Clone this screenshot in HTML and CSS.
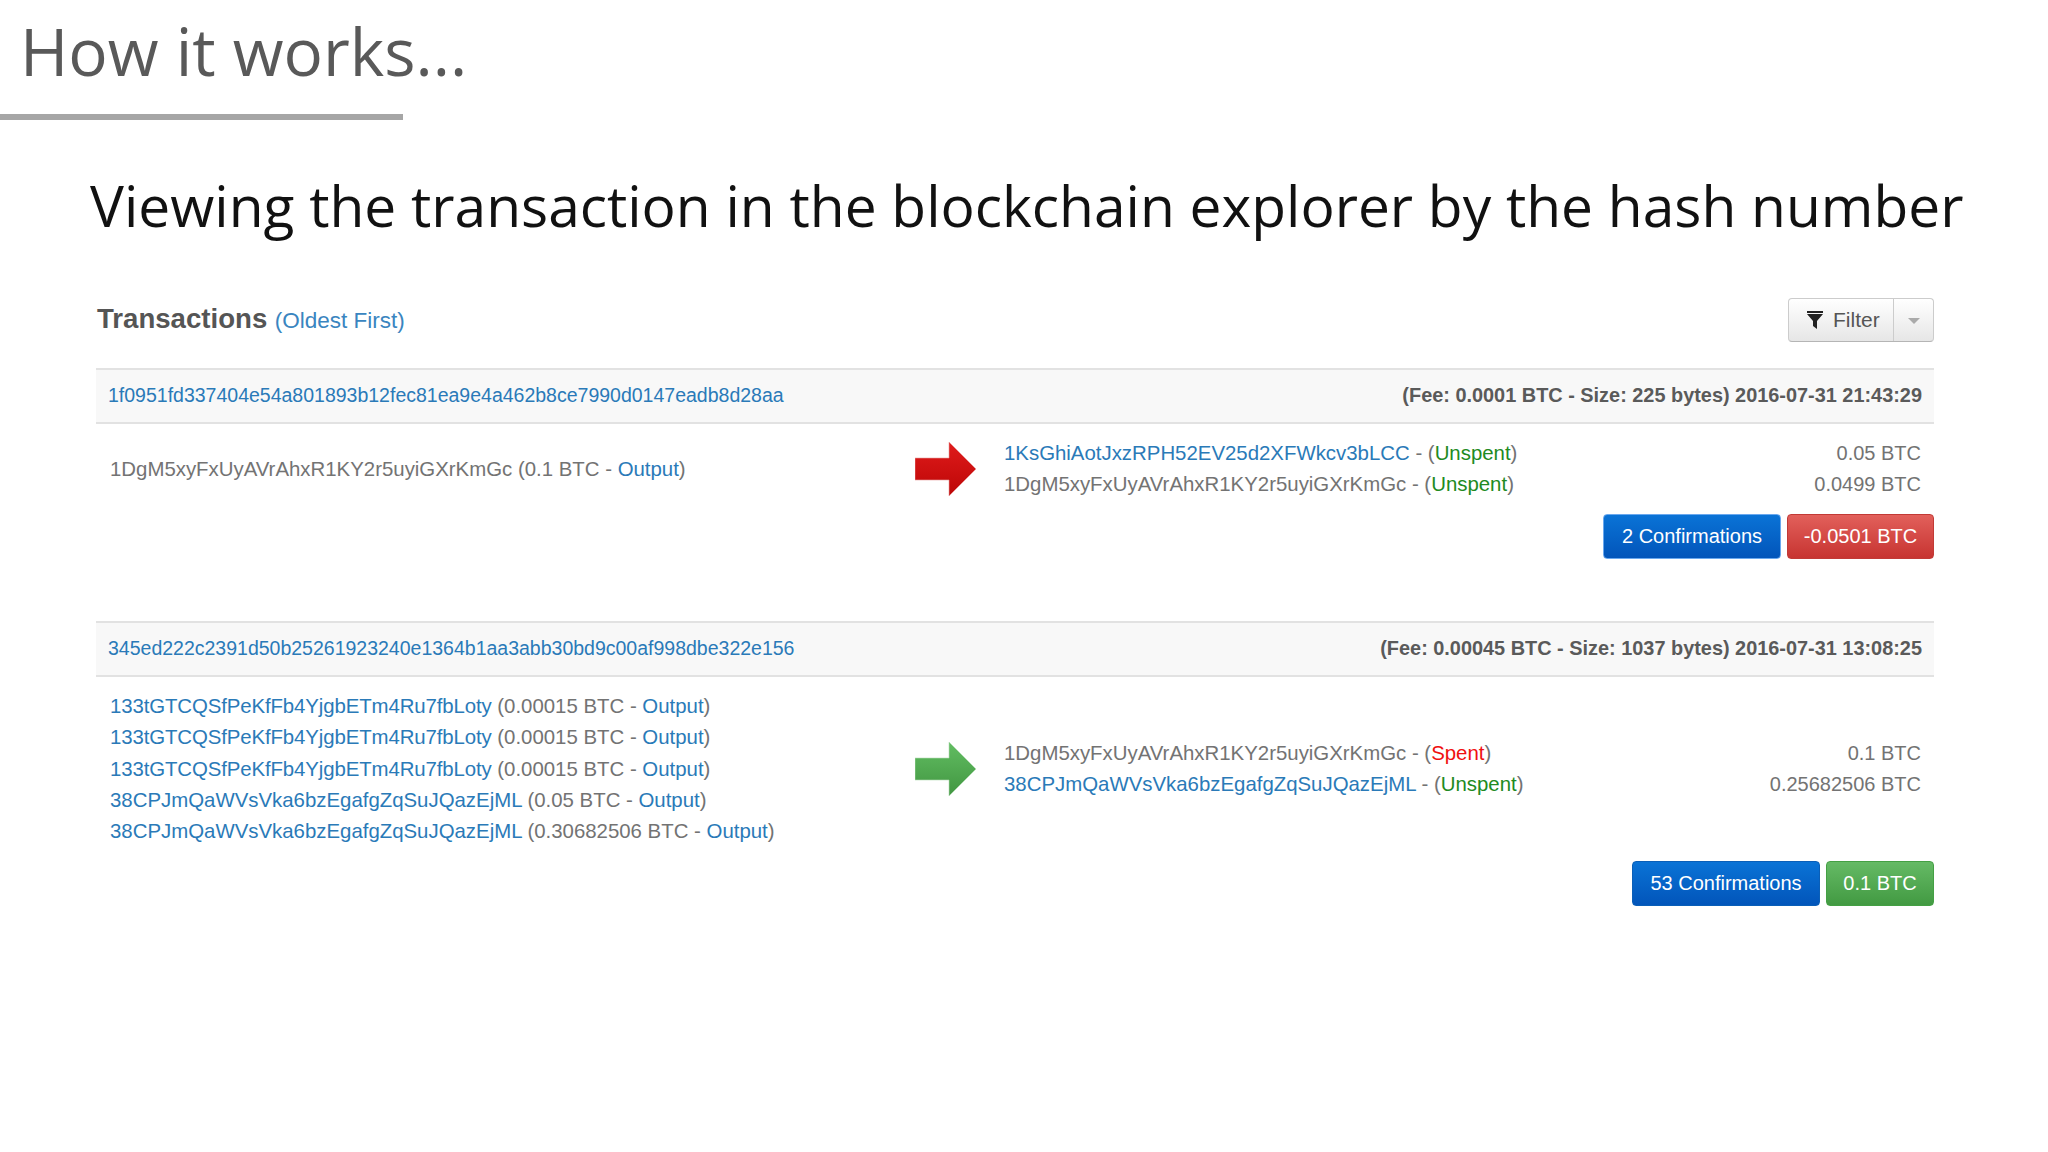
FILE: index.html
```html
<!DOCTYPE html>
<html lang="en">
<head>
    <meta charset="UTF-8">
    <title>How it works</title>
    <link rel="stylesheet" href="styles.css">
</head>
<body>
<div class="head">
    <h1>How it works...</h1>
    <div class="rule"></div>
</div>
<h2>Viewing the transaction in the blockchain explorer by the hash number</h2>
<div class="explorer">
    <div class="top">
        <div class="top-title"><b>Transactions</b> <a href="#">(Oldest First)</a></div>
        <div class="filter">
            <span class="filter-main">
                <svg class="funnel" width="16" height="18" viewBox="0 0 16 18"><path d="M0 0h16v2H0zM0 3h16l-6 7v8l-4-3v-5z"/></svg>
                Filter
            </span>
            <span class="filter-caret"></span>
        </div>
    </div>

    <div class="tx">
        <div class="band">
            <a href="#">1f0951fd337404e54a801893b12fec81ea9e4a462b8ce7990d0147eadb8d28aa</a>
            <b>(Fee: 0.0001 BTC - Size: 225 bytes) 2016-07-31 21:43:29</b>
        </div>
        <div class="flow">
            <div class="inputs">
                <div>1DgM5xyFxUyAVrAhxR1KY2r5uyiGXrKmGc (0.1 BTC - <a href="#">Output</a>)</div>
            </div>
            <svg class="arrow" width="61" height="54" viewBox="0 0 61 54">
                <defs>
                    <linearGradient id="red" x1="0" y1="0" x2="0" y2="1">
                        <stop offset="0" stop-color="#e01c1c"/>
                        <stop offset="1" stop-color="#bc0606"/>
                    </linearGradient>
                </defs>
                <path d="M0 16H34V0L61 27 34 54V38H0z" fill="url(#red)" stroke="#e8a0a0" stroke-width=".6"/>
            </svg>
            <div class="outputs">
                <div class="out"><span class="addr"><a href="#">1KsGhiAotJxzRPH52EV25d2XFWkcv3bLCC</a> - (<i class="unspent">Unspent</i>)</span><span>0.05 BTC</span></div>
                <div class="out"><span class="addr">1DgM5xyFxUyAVrAhxR1KY2r5uyiGXrKmGc - (<i class="unspent">Unspent</i>)</span><span>0.0499 BTC</span></div>
            </div>
        </div>
        <div class="totals">
            <span class="btn btn-blue btn-glow btn-w1">2 Confirmations</span>
            <span class="btn btn-red btn-w2">-0.0501 BTC</span>
        </div>
    </div>

    <div class="tx">
        <div class="band">
            <a href="#">345ed222c2391d50b25261923240e1364b1aa3abb30bd9c00af998dbe322e156</a>
            <b>(Fee: 0.00045 BTC - Size: 1037 bytes) 2016-07-31 13:08:25</b>
        </div>
        <div class="flow">
            <div class="inputs">
                <div><a class="tight" href="#">133tGTCQSfPeKfFb4YjgbETm4Ru7fbLoty</a> (0.00015 BTC - <a href="#">Output</a>)</div>
                <div><a class="tight" href="#">133tGTCQSfPeKfFb4YjgbETm4Ru7fbLoty</a> (0.00015 BTC - <a href="#">Output</a>)</div>
                <div><a class="tight" href="#">133tGTCQSfPeKfFb4YjgbETm4Ru7fbLoty</a> (0.00015 BTC - <a href="#">Output</a>)</div>
                <div><a href="#">38CPJmQaWVsVka6bzEgafgZqSuJQazEjML</a> (0.05 BTC - <a href="#">Output</a>)</div>
                <div><a href="#">38CPJmQaWVsVka6bzEgafgZqSuJQazEjML</a> (0.30682506 BTC - <a href="#">Output</a>)</div>
            </div>
            <svg class="arrow" width="61" height="54" viewBox="0 0 61 54">
                <defs>
                    <linearGradient id="green" x1="0" y1="0" x2="0" y2="1">
                        <stop offset="0" stop-color="#62bd62"/>
                        <stop offset="1" stop-color="#419641"/>
                    </linearGradient>
                </defs>
                <path d="M0 16H34V0L61 27 34 54V38H0z" fill="url(#green)" stroke="#b5dcb5" stroke-width=".6"/>
            </svg>
            <div class="outputs">
                <div class="out"><span class="addr">1DgM5xyFxUyAVrAhxR1KY2r5uyiGXrKmGc - (<i class="spent">Spent</i>)</span><span>0.1 BTC</span></div>
                <div class="out"><span class="addr"><a href="#">38CPJmQaWVsVka6bzEgafgZqSuJQazEjML</a> - (<i class="unspent">Unspent</i>)</span><span>0.25682506 BTC</span></div>
            </div>
        </div>
        <div class="totals">
            <span class="btn btn-blue btn-w3">53 Confirmations</span>
            <span class="btn btn-green btn-w4">0.1 BTC</span>
        </div>
    </div>
</div>
</body>
</html>
```

FILE: styles.css
```css
* {
    margin: 0;
    padding: 0;
    box-sizing: border-box;
}

body {
    width: 2048px;
    height: 1152px;
    overflow: hidden;
    background-color: #fff;
    font-family: "Open Sans", sans-serif;
}

a {
    color: #2a7ab8;
    text-decoration: none;
}

h1 {
    padding: 6px 0 0 20px;
    height: 114px;
    font-size: 65.6px;
    line-height: 90px;
    font-weight: 400;
    color: #595959;
}

.rule {
    width: 403px;
    height: 6px;
    background-color: #a6a6a6;
}

h2 {
    margin-top: 44px;
    padding-left: 90px;
    font-size: 56.88px;
    line-height: 82px;
    font-weight: 400;
    color: #111;
    white-space: nowrap;
}

.explorer {
    margin: 43px 114px 0 96px;
    font-family: "Liberation Sans", Arial, sans-serif;
    font-size: 20px;
    line-height: 31.4px;
    color: #737373;
}

.top {
    display: flex;
    justify-content: space-between;
    align-items: center;
    height: 79px;
    padding: 9px 0 26px;
}

.top-title {
    padding-left: 1px;
}

.top-title b {
    font-size: 27.6px;
    color: #555;
}

.top-title a {
    margin-left: 2px;
    font-size: 22.5px;
    color: #3a85c0;
}

.filter {
    display: flex;
    height: 44px;
    border: 1px solid #ccc;
    border-bottom-color: #b5b5b5;
    border-radius: 4px;
    background: linear-gradient(#fff, #e6e6e6);
    font-size: 21px;
    color: #555;
}

.filter-main {
    display: flex;
    align-items: center;
    gap: 10px;
    width: 105px;
    padding-left: 18px;
    border-right: 1px solid #ccc;
}

.funnel {
    fill: #222;
}

.filter-caret {
    width: 39px;
    position: relative;
}

.filter-caret::after {
    content: "";
    position: absolute;
    left: 14px;
    top: 19px;
    border: 6px solid transparent;
    border-top: 6px solid #aaa;
    border-bottom: 0;
}

.band {
    display: flex;
    justify-content: space-between;
    align-items: center;
    height: 56px;
    padding: 0 12px;
    background-color: #f8f8f8;
    border-top: 2px solid #e2e2e2;
    border-bottom: 2px solid #e2e2e2;
}

.band a {
    font-size: 19.5px;
}

.band b {
    font-size: 19.9px;
    color: #5a5a5a;
}

.flow {
    display: flex;
    align-items: center;
    padding: 14px 13px 0 14px;
}

.inputs {
    width: 805px;
    font-size: 20.4px;
}

.tight {
    letter-spacing: -0.11px;
}

.outputs {
    flex: 1;
    padding-left: 28px;
}

.out {
    display: flex;
    justify-content: space-between;
}

.addr {
    font-size: 20.4px;
}

.unspent {
    font-style: normal;
    color: #218a21;
}

.spent {
    font-style: normal;
    color: #f01010;
}

.totals {
    display: flex;
    justify-content: flex-end;
    gap: 6px;
    padding-top: 13px;
    margin-bottom: 62px;
}

.btn {
    height: 45px;
    border-radius: 4px;
    text-align: center;
    line-height: 43px;
    color: #fff;
}

.btn-blue {
    background: linear-gradient(#0a73d6, #0255ba);
    border: 1px solid #0a5fb8;
}

.btn-glow {
    border-color: #6aa8ee;
}

.btn-red {
    background: linear-gradient(#e2605b, #c73431);
    border: 1px solid #c23a36;
}

.btn-green {
    background: linear-gradient(#65ba65, #429a42);
    border: 1px solid #44a044;
}

.btn-w1 {
    width: 178px;
}

.btn-w2 {
    width: 147px;
}

.btn-w3 {
    width: 188px;
}

.btn-w4 {
    width: 108px;
}
```
